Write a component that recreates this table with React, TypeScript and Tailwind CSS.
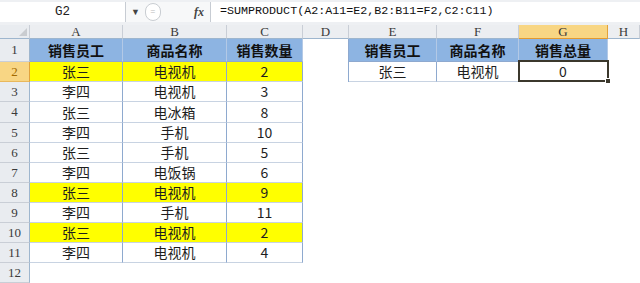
import React from "react";

interface RowData {
  seller: string;
  product: string;
  qty: string;
  highlight?: boolean;
}

const rows: RowData[] = [
  { seller: "张三", product: "电视机", qty: "2", highlight: true },
  { seller: "李四", product: "电视机", qty: "3" },
  { seller: "张三", product: "电冰箱", qty: "8" },
  { seller: "李四", product: "手机", qty: "10" },
  { seller: "张三", product: "手机", qty: "5" },
  { seller: "李四", product: "电饭锅", qty: "6" },
  { seller: "张三", product: "电视机", qty: "9", highlight: true },
  { seller: "李四", product: "手机", qty: "11" },
  { seller: "张三", product: "电视机", qty: "2", highlight: true },
  { seller: "李四", product: "电视机", qty: "4" }
];

const columns = ["A", "B", "C", "D", "E", "F", "G", "H"];

const cjk = "font-['Noto_Sans_CJK_SC',sans-serif]";
const headFont = "font-['Liberation_Serif',serif]";

const tableCell =
  "flex items-center justify-center border-r border-b border-r-[#8ea9cf] border-b-[#c8d3e2] text-[14px] text-[#1e1e1e] " + cjk;
const headCell =
  "flex items-center justify-center bg-[#8db4e2] border-r border-b border-r-[#b3c9e6] border-b-[#8ea9cf] text-[14px] font-bold text-[#111] " + cjk;

const RowHeader: React.FC<{ n: number; active?: boolean }> = ({ n, active }) => (
  <div
    className={
      "flex items-center justify-center border-r border-b text-[13px] " +
      headFont +
      (active
        ? " bg-[#f8d684] border-r-[#e2a23a] border-b-[#e9b85c] text-[#a26a00]"
        : " bg-[#e9ecf0] border-r-[#9eb6ce] border-b-[#c9ced6] text-[#3a3a3a]")
    }
  >
    {n}
  </div>
);

const App: React.FC = () => {
  return (
    <div className="w-[640px] h-[283px] overflow-hidden bg-white flex flex-col">
      {/* formula bar */}
      <div className="h-[25px] shrink-0 bg-[#eef0f3] pt-[2px] pb-[3px] flex">
        <div className="w-[126px] h-full bg-white border-r border-[#c7ccd3] flex items-center justify-center font-['Liberation_Mono',monospace] text-[12.5px] text-[#222]">
          G2
        </div>
        <div className="w-[84px] h-full bg-[#f7f8f9] flex items-center relative">
          <span className="ml-[5px] text-[9px] text-[#444]">▼</span>
          <div className="ml-[5px] w-[16px] h-[18px] rounded-full border border-[#c9cdd2] bg-white flex items-center justify-center text-[9px] text-[#bbb]">
            =
          </div>
          <span className="ml-auto mr-[6px] italic font-['Liberation_Serif',serif] text-[12px] text-[#444] font-bold">
            fx
          </span>
        </div>
        <div className="w-px h-full bg-[#c7ccd3]" />
        <div className="flex-1 h-full bg-white flex items-center pl-[9px] font-['Liberation_Mono',monospace] text-[11.7px] text-[#111]">
          =SUMPRODUCT(A2:A11=E2,B2:B11=F2,C2:C11)
        </div>
      </div>

      {/* sheet */}
      <div className="grid grid-cols-[30px_93px_104px_76px_46px_88px_82px_89px_1fr] grid-rows-[14px_23px_20px_20px_21px_20px_20px_20px_20px_20px_20px_20px_20px]">
        {/* corner */}
        <div className="relative bg-[#e9ecf0] border-r border-b border-r-[#c9ced6] border-b-[#9eb6ce]">
          <div className="absolute right-[2px] bottom-[2px] w-0 h-0 border-l-[8px] border-l-transparent border-b-[8px] border-b-[#c9ccd0]" />
        </div>
        {columns.map(c => (
          <div
            key={c}
            className={
              "flex items-center justify-center border-r border-b text-[13px] leading-none " +
              headFont +
              (c === "G"
                ? " bg-[#f8d684] border-r-[#e2a23a] border-b-[#e49a2e] text-[#333]"
                : " bg-[#eceef1] border-r-[#c9ced6] border-b-[#9eb6ce] text-[#3a3a3a]")
            }
          >
            {c}
          </div>
        ))}

        {/* row 1 */}
        <RowHeader n={1} />
        <div className={headCell}>销售员工</div>
        <div className={headCell}>商品名称</div>
        <div className={headCell}>销售数量</div>
        <div className="border-r border-r-[#8ea9cf]" />
        <div className={headCell}>销售员工</div>
        <div className={headCell}>商品名称</div>
        <div className={headCell}>销售总量</div>
        <div />

        {/* rows 2-11 */}
        {rows.map((r, i) => {
          const bg = r.highlight ? " bg-[#ffff00]" : " bg-white";
          return (
            <React.Fragment key={i}>
              <RowHeader n={i + 2} active={i === 0} />
              <div className={tableCell + bg}>{r.seller}</div>
              <div className={tableCell + bg}>{r.product}</div>
              <div className={tableCell + bg}>{r.qty}</div>
              {i === 0 ? (
                <>
                  <div className="border-r border-r-[#8ea9cf]" />
                  <div className={tableCell}>张三</div>
                  <div className={tableCell}>电视机</div>
                  <div className={tableCell + " relative"}>
                    0
                    <div className="absolute -top-[2px] -left-[1px] -right-[2px] -bottom-[1px] border-2 border-[#3b382c]" />
                    <div className="absolute -right-[4px] -bottom-[3px] w-[6px] h-[6px] bg-[#3b382c] border border-white" />
                  </div>
                  <div />
                </>
              ) : (
                <>
                  <div />
                  <div />
                  <div />
                  <div />
                  <div />
                </>
              )}
            </React.Fragment>
          );
        })}

        {/* row 12 */}
        <RowHeader n={12} />
        <div />
        <div />
        <div />
        <div />
        <div />
        <div />
        <div />
        <div />
      </div>
    </div>
  );
};

export default App;
